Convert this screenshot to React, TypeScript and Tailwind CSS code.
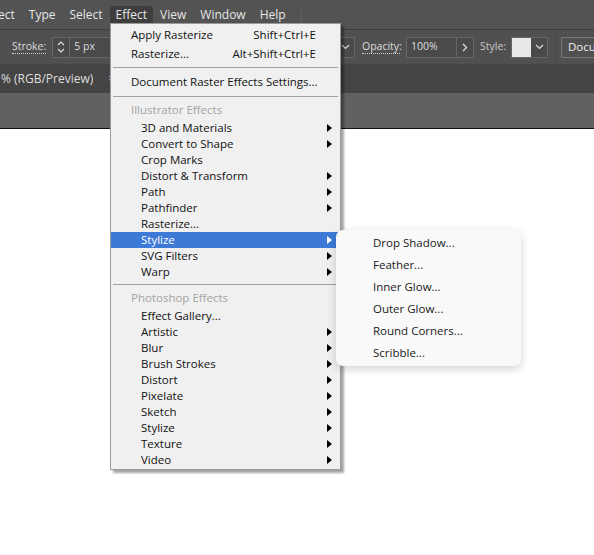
import React from "react";

const FONT = { fontFamily: '"Open Sans", "Noto Sans", sans-serif' };

function Arrow({ white }: { white?: boolean }) {
  return (
    <svg width="5" height="8" viewBox="0 0 5 8" className="shrink-0">
      <path d="M0 0 L5 4 L0 8 Z" fill={white ? "#ffffff" : "#000000"} />
    </svg>
  );
}

type Item = { label: string; sub?: boolean; active?: boolean };

const illustrator: Item[] = [
  { label: "3D and Materials", sub: true },
  { label: "Convert to Shape", sub: true },
  { label: "Crop Marks" },
  { label: "Distort & Transform", sub: true },
  { label: "Path", sub: true },
  { label: "Pathfinder", sub: true },
  { label: "Rasterize..." },
  { label: "Stylize", sub: true, active: true },
  { label: "SVG Filters", sub: true },
  { label: "Warp", sub: true },
];

const photoshop: Item[] = [
  { label: "Effect Gallery..." },
  { label: "Artistic", sub: true },
  { label: "Blur", sub: true },
  { label: "Brush Strokes", sub: true },
  { label: "Distort", sub: true },
  { label: "Pixelate", sub: true },
  { label: "Sketch", sub: true },
  { label: "Stylize", sub: true },
  { label: "Texture", sub: true },
  { label: "Video", sub: true },
];

function SubRow({ item }: { item: Item }) {
  return (
    <div
      className={`flex h-[16px] items-center pl-[30px] pr-[8px] ${
        item.active ? "bg-[#3d7ad8] text-white" : "text-[#111]"
      }`}
    >
      <span className="flex-1 leading-none">{item.label}</span>
      {item.sub ? <Arrow white={item.active} /> : null}
    </div>
  );
}

function Sep() {
  return (
    <div className="flex h-[8px] items-center px-[2px]">
      <div className="h-px w-full bg-[#a0a0a0]" />
    </div>
  );
}

function Chevron() {
  return (
    <svg width="9" height="6" viewBox="0 0 9 6">
      <path d="M1 1 L4.5 4.5 L8 1" stroke="#dcdcdc" strokeWidth="1.2" fill="none" />
    </svg>
  );
}

export default function App() {
  return (
    <div className="relative h-[555px] w-[594px] overflow-hidden bg-white" style={FONT}>
      {/* menu bar */}
      <div className="flex h-[29px] items-center bg-[#535353] text-[12px] text-[#e6e6e6]">
        <div className="flex h-full items-center">
          <span className="ml-[-9px] px-[7px]">ect</span>
          <span className="px-[7px]">Type</span>
          <span className="px-[7px]">Select</span>
          <span className="flex h-[17px] items-center rounded-t-[3px] bg-[#3e3e3e] px-[6px]">Effect</span>
          <span className="px-[7px]">View</span>
          <span className="px-[7px]">Window</span>
          <span className="px-[7px]">Help</span>
        </div>
        <div className="ml-[8px] h-[22px] w-px bg-[#5e5e5e]" />
      </div>

      {/* control bar */}
      <div className="flex h-[35px] items-center border-t border-[#3d3d3d] bg-[#505050] text-[10.5px] text-[#dcdcdc]">
        <span className="ml-[12px] border-b border-dotted border-[#cfcfcf] leading-[13px]">Stroke:</span>
        <div className="ml-[6px] flex h-[21px] w-[60px] border border-[#676767] bg-[#4a4a4a]">
          <div className="flex w-[17px] flex-col items-center justify-center border-r border-[#676767]">
            <svg width="8" height="14" viewBox="0 0 8 14">
              <path d="M1 5 L4 2 L7 5 M1 9 L4 12 L7 9" stroke="#dcdcdc" strokeWidth="1.2" fill="none" />
            </svg>
          </div>
          <span className="ml-[4px] self-center">5 px</span>
        </div>
        <div className="ml-auto flex items-center">
          <div className="flex h-[21px] w-[20px] items-center justify-center border border-[#676767] bg-[#4a4a4a]">
            <Chevron />
          </div>
          <span className="ml-[7px] w-[38px] border-b border-dotted border-[#cfcfcf] leading-[13px]">Opacity:</span>
          <div className="ml-[6px] flex h-[21px] w-[68px] border border-[#676767] bg-[#4a4a4a]">
            <span className="ml-[4px] flex-1 self-center">100%</span>
            <div className="flex w-[17px] items-center justify-center border-l border-[#676767]">
              <svg width="6" height="9" viewBox="0 0 6 9">
                <path d="M1 1 L4.5 4.5 L1 8" stroke="#dcdcdc" strokeWidth="1.3" fill="none" />
              </svg>
            </div>
          </div>
          <span className="ml-[6px] w-[25px] text-[#c8c8c8]">Style:</span>
          <div className="ml-[6px] flex h-[21px] w-[37px] border border-[#676767] bg-[#4a4a4a]">
            <div className="w-[19px] bg-[#e8e8e8]" />
            <div className="flex flex-1 items-center justify-center">
              <Chevron />
            </div>
          </div>
          <div className="ml-[8px] h-[28px] w-px bg-[#464646]" />
          <div className="ml-[4px] flex h-[21px] w-[33px] items-center overflow-hidden whitespace-nowrap rounded-l-[2px] border border-r-0 border-[#777] pl-[6px] text-[11.5px] text-[#eee]">
            Docu
          </div>
        </div>
      </div>

      {/* tab row */}
      <div className="flex h-[29px] items-center bg-[#444444] text-[12px] text-[#dedede]">
        <span className="ml-[1px]">% (RGB/Preview)</span>
        <span className="ml-[15px] text-[11px]">×</span>
      </div>

      {/* gray canvas strip */}
      <div className="h-[36px] border-b border-[#111] bg-[#616161]" />

      {/* Effect menu */}
      <div className="absolute left-[110px] top-[23px] w-[231px] border border-[#9b9b9b] bg-[#f0f0f0] py-[1px] text-[11.5px] text-[#111] shadow-[3px_3px_2px_rgba(0,0,0,0.35)]">
        <div className="flex h-[19px] items-center pl-[20px] pr-[24px]">
          <span className="flex-1">Apply Rasterize</span>
          <span>Shift+Ctrl+E</span>
        </div>
        <div className="flex h-[19px] items-center pl-[20px] pr-[24px]">
          <span className="flex-1">Rasterize...</span>
          <span>Alt+Shift+Ctrl+E</span>
        </div>
        <div className="flex h-[9px] items-center px-[2px]">
          <div className="h-px w-full bg-[#a0a0a0]" />
        </div>
        <div className="flex h-[20px] items-center pl-[20px]">Document Raster Effects Settings...</div>
        <Sep />
        <div className="flex h-[20px] items-center pl-[20px] text-[#a3a3a3]">Illustrator Effects</div>
        {illustrator.map((it) => (
          <SubRow key={"i" + it.label} item={it} />
        ))}
        <Sep />
        <div className="flex h-[20px] items-center pl-[20px] text-[#a3a3a3]">Photoshop Effects</div>
        {photoshop.map((it) => (
          <SubRow key={"p" + it.label} item={it} />
        ))}
      </div>

      {/* Stylize submenu */}
      <div className="absolute left-[336px] top-[230px] w-[185px] rounded-[7px] bg-[#f9f9f9] py-[2px] text-[11.5px] text-[#1a1a1a] shadow-[0_3px_10px_rgba(0,0,0,0.18)]">
        {["Drop Shadow...", "Feather...", "Inner Glow...", "Outer Glow...", "Round Corners...", "Scribble..."].map((t) => (
          <div key={t} className="flex h-[22px] items-center pl-[37px]">
            {t}
          </div>
        ))}
      </div>
    </div>
  );
}
